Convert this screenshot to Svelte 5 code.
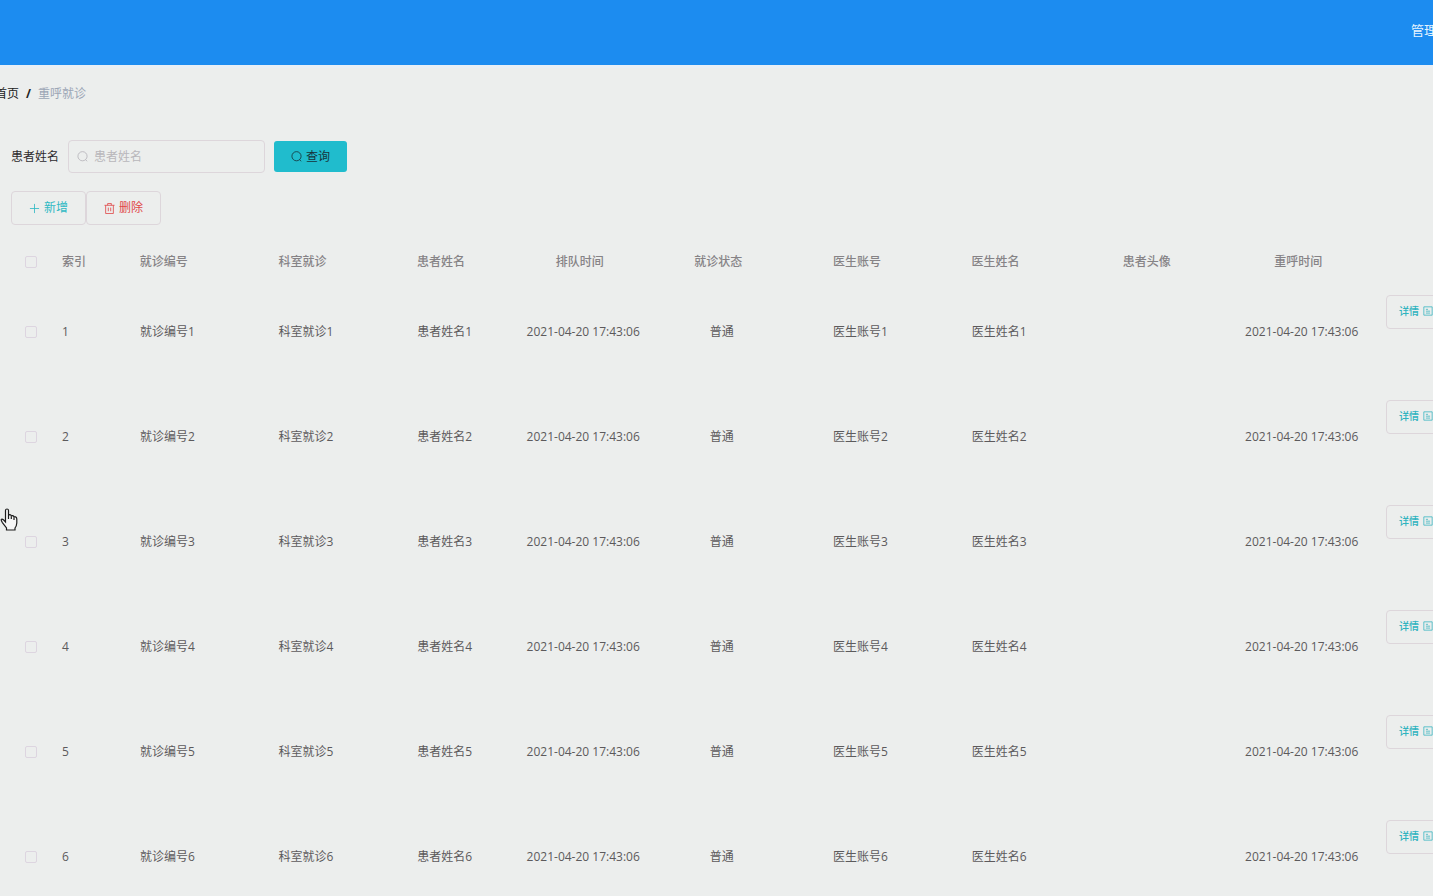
<script lang="ts">
	let name = $state('');
	let selected = $state<number[]>([]);

	const columns = [
		'就诊编号',
		'科室就诊',
		'患者姓名',
		'排队时间',
		'就诊状态',
		'医生账号',
		'医生姓名',
		'患者头像',
		'重呼时间'
	];

	const rows = [1, 2, 3, 4, 5, 6].map((id) => ({
		id,
		cells: [
			`就诊编号${id}`,
			`科室就诊${id}`,
			`患者姓名${id}`,
			'2021-04-20 17:43:06',
			'普通',
			`医生账号${id}`,
			`医生姓名${id}`,
			'',
			'2021-04-20 17:43:06'
		]
	}));

	function toggleAll(e: Event) {
		const checked = (e.target as HTMLInputElement).checked;
		selected = checked ? rows.map((r) => r.id) : [];
	}
</script>

{#snippet searchIcon()}
	<svg class="icon" viewBox="0 0 12 12" aria-hidden="true">
		<circle cx="6" cy="5.7" r="5" />
		<path d="M9.4 9.4 11 11.2" />
	</svg>
{/snippet}

<div class="page">
	<header class="topbar">
		<span class="user">管理</span>
	</header>

	<main>
		<nav class="breadcrumb" aria-label="breadcrumb">
			<a href="#home">首页</a>
			<span class="sep">/</span>
			<span class="current">重呼就诊</span>
		</nav>

		<form class="search" onsubmit={(e) => e.preventDefault()}>
			<label for="patient">患者姓名</label>
			<div class="field">
				{@render searchIcon()}
				<input id="patient" type="text" placeholder="患者姓名" bind:value={name} />
			</div>
			<button class="query" type="submit">{@render searchIcon()}查询</button>
		</form>

		<div class="actions">
			<button class="plain add" type="button">
				<svg class="icon" viewBox="0 0 12 12" aria-hidden="true">
					<path d="M6 1v10M1 6h10" />
				</svg>新增
			</button>
			<button class="plain remove" type="button">
				<svg class="icon" viewBox="0 0 12 12" aria-hidden="true">
					<path d="M.5 2.5h11M4 2.5v-2h4v2M1.8 2.5v9h8.4v-9M4.7 5v4M7.3 5v4" />
				</svg>删除
			</button>
		</div>

		<table>
			<colgroup>
				<col class="col-check" />
				<col class="col-index" />
				{#each columns as column (column)}
					<col class:col-avatar={column === '患者头像'} />
				{/each}
				<col class="col-ops" />
			</colgroup>
			<thead>
				<tr>
					<th>
						<input
							type="checkbox"
							aria-label="全选"
							checked={selected.length === rows.length}
							onchange={toggleAll}
						/>
					</th>
					<th class="index">索引</th>
					{#each columns as column (column)}
						<th class="data">{column}</th>
					{/each}
					<th></th>
				</tr>
			</thead>
			<tbody>
				{#each rows as row (row.id)}
					<tr>
						<td>
							<input
								type="checkbox"
								aria-label="选择 {row.id}"
								value={row.id}
								bind:group={selected}
							/>
						</td>
						<td class="index">{row.id}</td>
						{#each row.cells as cell}
							<td>{cell}</td>
						{/each}
						<td class="ops">
							<button class="plain detail" type="button">
								详情
								<svg class="icon" viewBox="0 0 12 12" aria-hidden="true">
									<path d="M1 1h10v10H1zM3.5 4h2.5M3.5 6.2h5M3.5 8.5h5" />
								</svg>
							</button>
						</td>
					</tr>
				{/each}
			</tbody>
		</table>
	</main>

	<svg class="cursor" viewBox="0 0 18 23" aria-hidden="true">
		<path
			d="M5.5 14V2.5Q5.5 1 7 1T8.5 2.5V8Q8.7 6.5 10 6.7T11.3 8.5Q11.6 7.3 12.8 7.6T14 9.5Q14.4 8.4 15.6 8.9T16.8 11V15Q16.6 18 15 20V22H6.5V20L2.2 14.3Q.6 11.6 1.5 11.2T3.7 12Z"
		/>
		<path d="M8.5 8v3M11.3 8.5V11M14 9.5V12" />
	</svg>
</div>

<style>
	:global(body) {
		background: #eceeed;
	}

	.page {
		position: relative;
		min-height: 100vh;
		overflow: hidden;
		font-family: 'Open Sans', 'Noto Sans CJK SC', sans-serif;
		font-size: 12px;
		line-height: 18px;
		color: #5c5a5c;
	}

	.topbar {
		display: flex;
		justify-content: flex-end;
		height: 65px;
		box-sizing: border-box;
		padding-top: 21px;
		background: #1c8cf0;
		box-shadow: 0 3px 0 #e9eff5;
	}
	.user {
		margin-right: -4px;
		font-size: 13px;
		color: #e6f4ff;
	}

	main {
		padding: 20px 0 0 11px;
	}

	.breadcrumb {
		display: flex;
		gap: 7px;
		margin-left: -16px;
	}
	.breadcrumb a {
		color: #222;
		text-decoration: none;
	}
	.sep {
		font-weight: 700;
		color: #222;
	}
	.current {
		color: #9ba5b5;
	}

	.search {
		display: flex;
		align-items: center;
		margin-top: 37px;
	}
	.search label {
		margin-right: 9px;
		color: #2e2b2e;
	}
	.field {
		display: flex;
		align-items: center;
		gap: 6px;
		width: 197px;
		height: 33px;
		box-sizing: border-box;
		padding: 0 8px;
		border: 1px solid #ddd6db;
		border-radius: 4px;
		color: #b5b3b8;
	}
	.field input {
		flex: 1;
		min-width: 0;
		padding: 0;
		border: 0;
		outline: 0;
		background: none;
		font: inherit;
		color: #5c5a5c;
	}
	.field input::placeholder {
		color: #b9b7bb;
		opacity: 1;
	}

	button {
		display: inline-flex;
		align-items: center;
		justify-content: center;
		gap: 4px;
		box-sizing: border-box;
		padding: 0;
		font: inherit;
		white-space: nowrap;
		cursor: pointer;
	}
	.query {
		width: 73px;
		height: 31px;
		margin-left: 9px;
		border: 0;
		border-radius: 3px;
		background: #20bccd;
		color: #17343c;
	}

	.plain {
		height: 34px;
		border: 1px solid #ddd6db;
		border-radius: 4px;
		background: none;
	}
	.actions {
		display: flex;
		margin-top: 18px;
	}
	.actions .plain {
		width: 75px;
	}
	.add {
		color: #2fb9c4;
	}
	.remove {
		color: #e04848;
	}

	.icon {
		flex: none;
		width: 11px;
		height: 11px;
		fill: none;
		stroke: currentColor;
		stroke-width: 0.9;
	}

	table {
		width: 100%;
		margin-top: 19px;
		table-layout: fixed;
		border-collapse: collapse;
		text-align: center;
	}
	.col-check {
		width: 40px;
	}
	.col-index {
		width: 47px;
	}
	.col-avatar {
		width: 164px;
	}
	.col-ops {
		width: 62px;
	}
	th,
	td {
		padding: 0;
		white-space: nowrap;
	}
	th {
		height: 35px;
		font-weight: 500;
		color: #868386;
	}
	th.data {
		padding-right: 7px;
	}
	td {
		height: 105px;
	}
	.index {
		padding-left: 11px;
		text-align: left;
	}
	.ops {
		padding: 16px 0 0 15px;
		box-sizing: border-box;
		vertical-align: top;
		text-align: left;
	}
	.detail {
		padding: 0 12px 2px;
		font-size: 10px;
		font-weight: 500;
		color: #2fb3bf;
	}
	.detail .icon {
		width: 10px;
		height: 10px;
	}

	input[type='checkbox'] {
		display: block;
		width: 12px;
		height: 12px;
		margin: 0 auto;
		appearance: none;
		border: 1px solid #ddd5e0;
		border-radius: 2px;
	}
	input[type='checkbox']:checked {
		background: #20bccd;
	}

	/* hand pointer floating over the list */
	.cursor {
		position: absolute;
		top: 508px;
		left: 0;
		width: 18px;
		height: 23px;
		fill: #f6f6f6;
		stroke: #1c1c1c;
		stroke-width: 1.2;
		pointer-events: none;
	}
</style>
